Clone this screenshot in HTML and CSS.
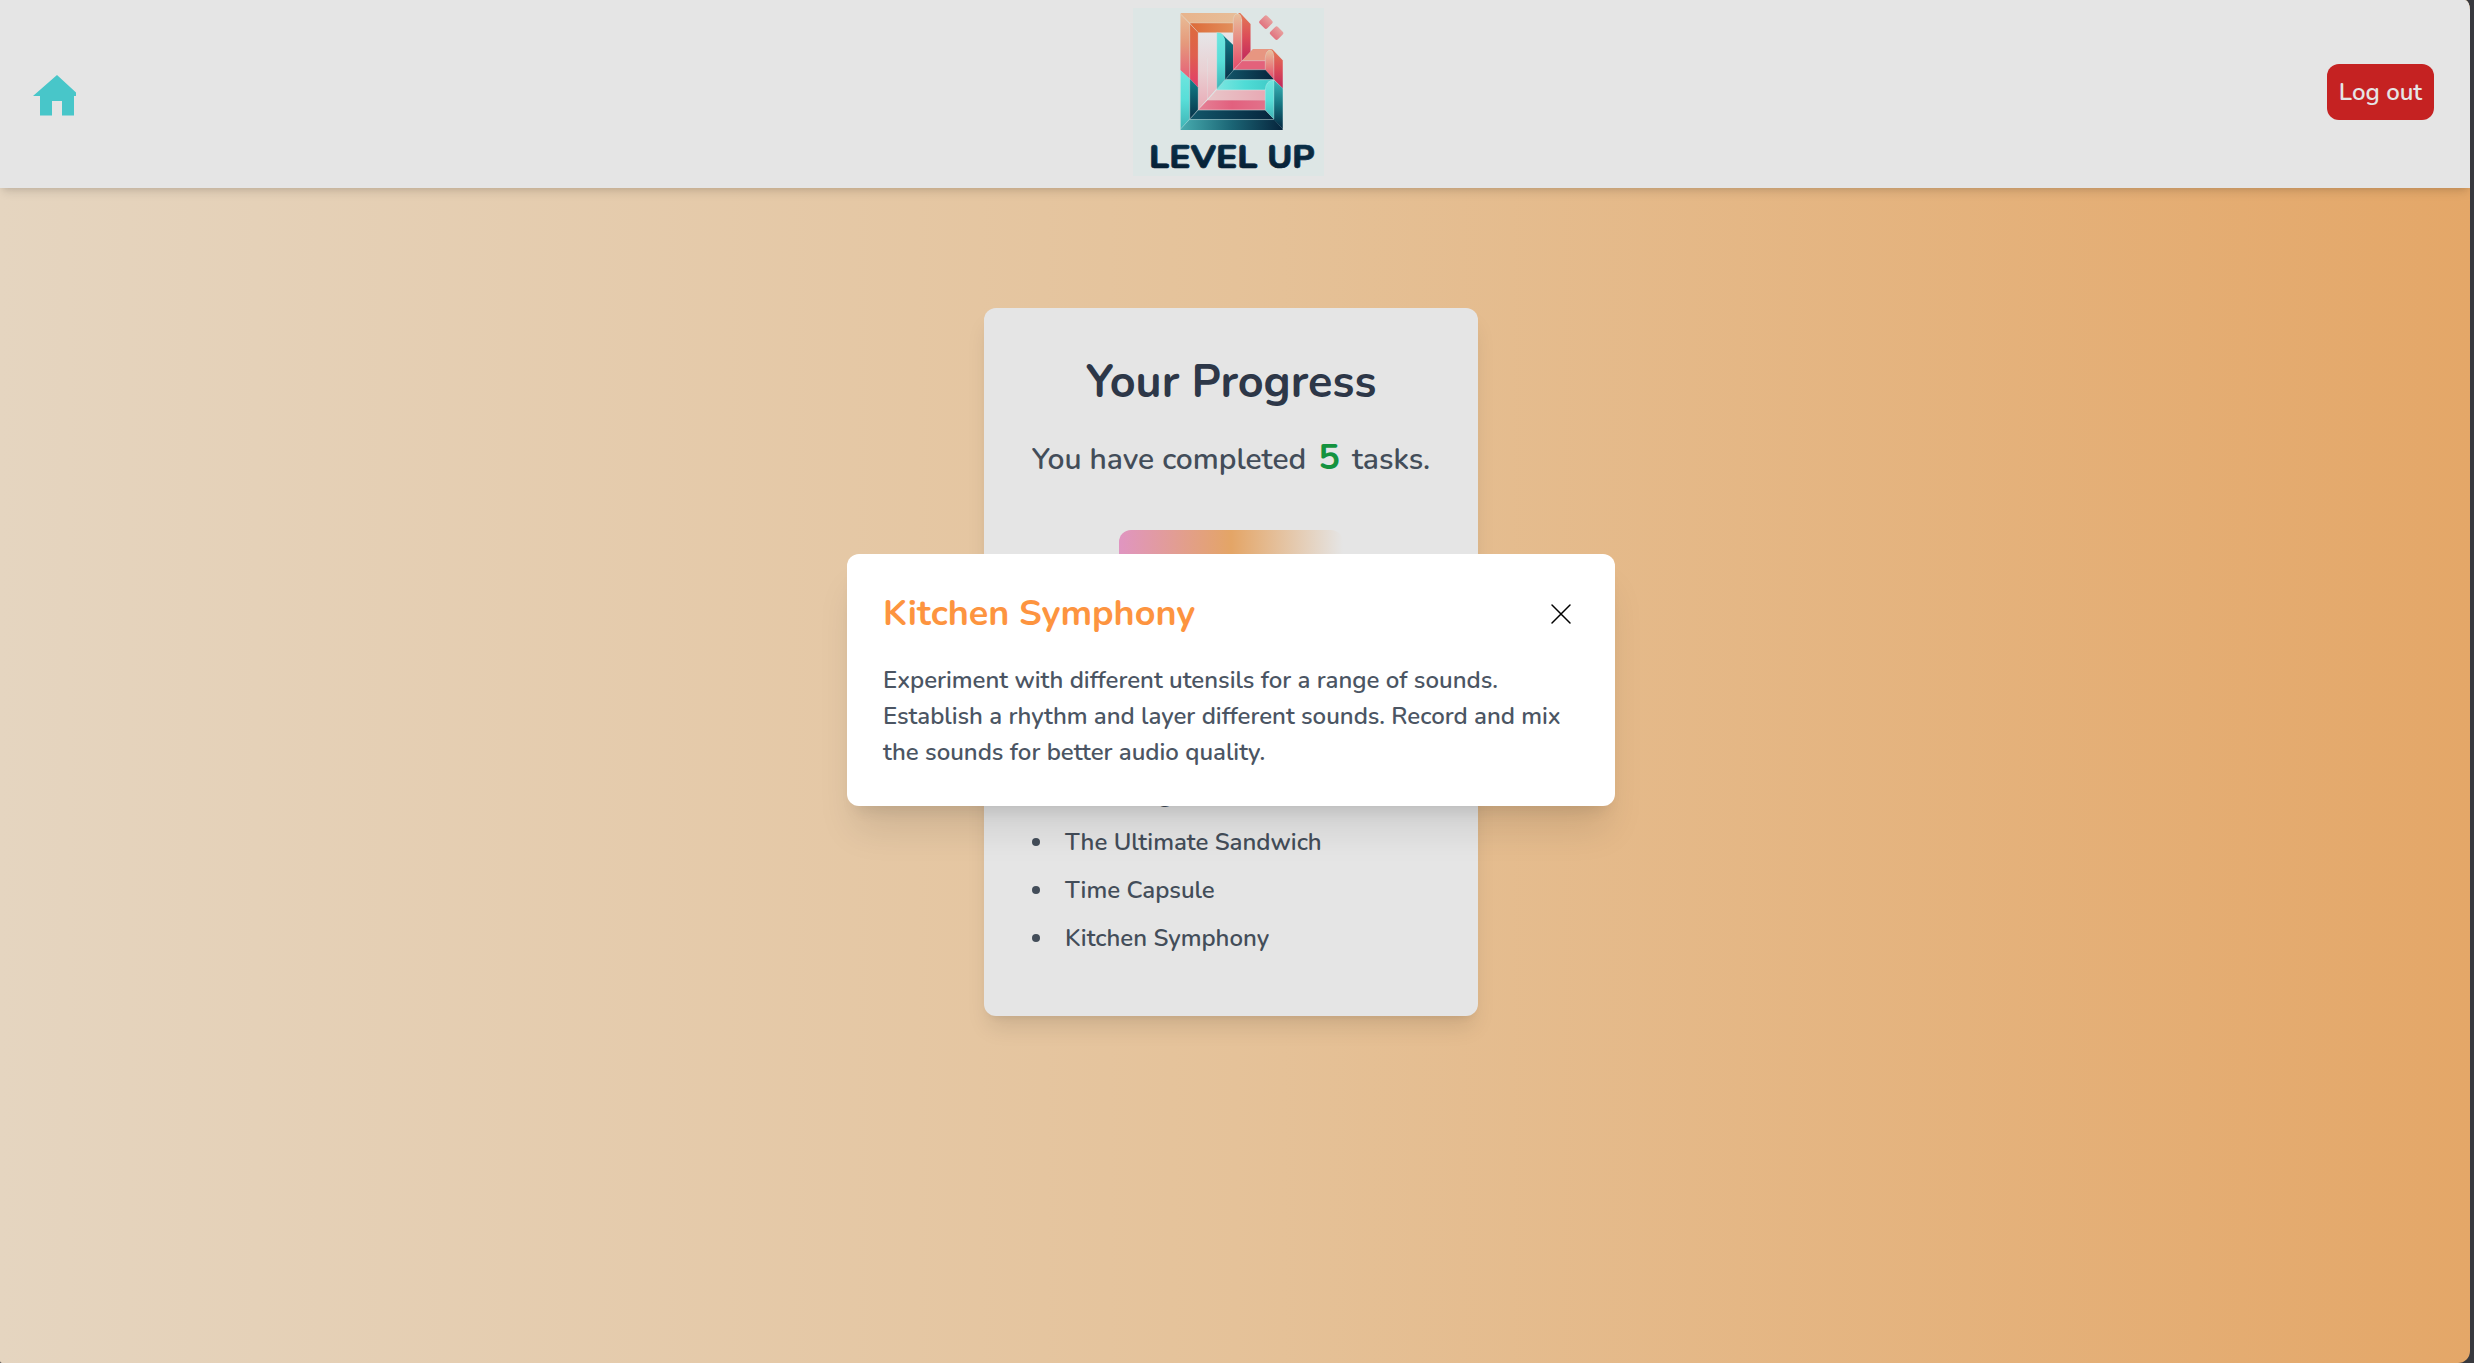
FILE: index.html
```html
<!DOCTYPE html>
<html lang="en">
<head>
<meta charset="utf-8">
<title>Level Up</title>
<link rel="stylesheet" href="styles.css">
</head>
<body>
<div class="app">
  <header class="header">
    <a class="home" href="#" aria-label="Home">
      <svg width="43" height="40" viewBox="0 0 43 40"><path fill="#48c6c9" d="M24 0 43 17.5V21H41V40.5H29V26H19V40.5H7V21H0Z"/></svg>
    </a>
    <svg class="logo" viewBox="40 24 572 503" role="img" aria-label="Level Up">
      <defs>
        <linearGradient id="outerL" x2="0" y2="1"><stop stop-color="#e9bd97"/><stop offset=".45" stop-color="#e59a7c"/><stop offset="1" stop-color="#e65f79"/></linearGradient>
        <linearGradient id="innerL" x2="0" y2="1"><stop stop-color="#dd6c3c"/><stop offset=".5" stop-color="#df5f4e"/><stop offset="1" stop-color="#e23c6b"/></linearGradient>
        <linearGradient id="topA"><stop stop-color="#e8b48c"/><stop offset="1" stop-color="#e7bd98"/></linearGradient>
        <linearGradient id="topB"><stop stop-color="#dd6a38"/><stop offset="1" stop-color="#e28f5c"/></linearGradient>
        <linearGradient id="armL" x2="0" y2="1"><stop stop-color="#e8c09c"/><stop offset=".5" stop-color="#e78580"/><stop offset="1" stop-color="#e24a6b"/></linearGradient>
        <linearGradient id="armR" x2="0" y2="1"><stop stop-color="#e37a55"/><stop offset=".5" stop-color="#dc4d58"/><stop offset="1" stop-color="#c0285c"/></linearGradient>
        <linearGradient id="paper" x2="0" y2="1"><stop stop-color="#e6e6e8"/><stop offset=".5" stop-color="#e9d0d3"/><stop offset="1" stop-color="#e9a9b5"/></linearGradient>
        <linearGradient id="teal" x2="0" y2="1"><stop stop-color="#70e6df"/><stop offset=".5" stop-color="#58ded8"/><stop offset="1" stop-color="#3fb3b5"/></linearGradient>
        <linearGradient id="tealH"><stop stop-color="#7ce6e0"/><stop offset=".5" stop-color="#4fdcd6"/><stop offset="1" stop-color="#3fc9c6"/></linearGradient>
        <linearGradient id="deep" x2="0" y2="1"><stop stop-color="#11808a"/><stop offset="1" stop-color="#073148"/></linearGradient>
        <linearGradient id="side" x2="0" y2="1"><stop stop-color="#3cb9ba"/><stop offset=".5" stop-color="#167581"/><stop offset="1" stop-color="#052841"/></linearGradient>
        <linearGradient id="navy"><stop stop-color="#12576a"/><stop offset="1" stop-color="#06243c"/></linearGradient>
        <linearGradient id="base"><stop stop-color="#48adb0"/><stop offset=".5" stop-color="#1b6575"/><stop offset="1" stop-color="#06243c"/></linearGradient>
        <linearGradient id="rose"><stop stop-color="#e58196"/><stop offset=".5" stop-color="#e2607e"/><stop offset="1" stop-color="#e2718a"/></linearGradient>
        <linearGradient id="blush"><stop stop-color="#e8c6c9"/><stop offset="1" stop-color="#e8a9b4"/></linearGradient>
        <linearGradient id="gem" x2="0" y2="1"><stop stop-color="#e8a09e"/><stop offset="1" stop-color="#e1737f"/></linearGradient>
        <linearGradient id="ink" x2="0" y2="1"><stop stop-color="#0b3650"/><stop offset="1" stop-color="#06192c"/></linearGradient>
      </defs>
      <path fill="#dde6e5" d="M40 24h572v503H40z"/>
      <path fill="url(#paper)" d="M235 97H340V209L235 329Z"/>
      <path fill="url(#topA)" d="M182 43q0-4 4-4H352L340 69H210Z"/>
      <path fill="url(#topB)" d="M210 69H340V97H235Z"/>
      <path fill="url(#outerL)" d="M182 41 210 70V236L182 210Z"/>
      <path fill="url(#innerL)" d="M210 70 235 97V262L210 236Z"/>
      <path fill="url(#teal)" d="M182 210 210 236V358L182 387Z"/>
      <path fill="url(#deep)" d="M210 236 235 262V329L210 358Z"/>
      <path fill="url(#teal)" d="M291 97Q316 97 316 124V240L291 269Z"/>
      <path fill="url(#deep)" d="M302 98 340 135V210L316 240V124Q315 107 302 98Z"/>
      <path fill="url(#armR)" d="M355 39H361L392 72V155L366 183V60Z"/>
      <path fill="url(#armL)" d="M340 66Q340 41 353 41 366 41 366 66V183L340 209Z"/>
      <path fill="#e79681" d="M399 147H456L437 182H366Z"/>
      <path fill="#e3627b" d="M366 182H437V209H340Z"/>
      <path fill="url(#armR)" d="M450 148H458L489 181V265L462 238V170Z"/>
      <path fill="url(#armL)" d="M436 176Q437 150 452 150 462 152 462 176V238L436 209Z"/>
      <path fill="url(#navy)" d="M340 209H436L462 238H316Z"/>
      <path fill="url(#tealH)" d="M316 239H460L437 269H291Z"/>
      <path fill="url(#blush)" d="M290 270H437V300H263Z"/>
      <path fill="url(#rose)" d="M263 300H437V329H235Z"/>
      <path fill="url(#navy)" d="M235 330H436L463 358H210Z"/>
      <path fill="url(#base)" d="M210 358H463L489 387Q489 389 486 389H184Q182 389 182 386Z"/>
      <path fill="url(#side)" d="M461 239 489 265V387L461 357Z"/>
      <path fill="url(#teal)" d="M436 329V270Q437 241 462 240V357Z"/>
      <g fill="none" stroke="#dfeeed" stroke-opacity=".45" stroke-width="2">
        <path d="M182 387 366 183M182 41 235 97V329M210 70V358M182 210V386M210 69H340M366 182H436M340 209H436M210 358H462M316 239H460M263 175V300"/>
        <path d="M340 97V66Q340 41 353 41 366 41 366 66V183M436 209V176Q437 150 452 150 462 152 462 176V357M436 329V270Q437 241 462 240M291 269V97M489 181V387"/>
      </g>
      <rect fill="url(#gem)" x="422" y="50" width="32" height="32" rx="6" transform="rotate(45 438 66)"/>
      <rect fill="url(#gem)" x="454" y="83" width="32" height="32" rx="6" transform="rotate(45 470 99)"/>
      <g class="wordmark" fill="url(#ink)" stroke="url(#ink)">
        <text x="88" y="504" textLength="325" lengthAdjust="spacingAndGlyphs">LEVEL</text>
        <text x="442" y="504" textLength="142" lengthAdjust="spacingAndGlyphs">UP</text>
      </g>
    </svg>
    <button class="logout">Log out</button>
  </header>

  <main class="main">
    <section class="card">
      <h1 class="card-title">Your Progress</h1>
      <p class="summary">You have completed <span class="count">5</span> tasks.</p>
      <div class="bar"></div>
      <ul class="tasks">
        <li>Sketching</li>
        <li>The Ultimate Sandwich</li>
        <li>Time Capsule</li>
        <li>Kitchen Symphony</li>
      </ul>
    </section>
  </main>
</div>

<div class="modal" role="dialog" aria-labelledby="modal-title">
  <div class="modal-head">
    <h2 class="modal-title" id="modal-title">Kitchen Symphony</h2>
    <svg class="close" viewBox="0 0 24 24"><path d="M6 18 18 6M6 6l12 12" fill="none" stroke="#000" stroke-width="1" stroke-linecap="round"/></svg>
  </div>
  <p class="modal-text">Experiment with different utensils for a range of sounds. Establish a rhythm and layer different sounds. Record and mix the sounds for better audio quality.</p>
</div>
</body>
</html>
```
FILE: styles.css
```css
* { box-sizing: border-box; margin: 0; padding: 0; }

body {
  height: 1363px;
  overflow: hidden;
  background: #38393e;
  font-family: Nunito, Lato, "Open Sans", sans-serif;
  font-size: 24px;
  font-weight: 600;
  line-height: 36px;
}

.app {
  width: 2470px;
  height: 1363px;
  display: flex;
  flex-direction: column;
  overflow: hidden;
  border-radius: 0 5px 12px 2px / 0 10px 12px 2px;
  background: linear-gradient(to right, #e5d5c0, #e5c299 50%, #e4a768);
}

.header {
  flex: none;
  height: 188px;
  display: grid;
  grid-template-columns: 1fr auto 1fr;
  align-items: start;
  padding: 8px 36px 0 33px;
  background: #e5e5e5;
  box-shadow: 0 6px 9px -1.5px rgba(0, 0, 0, .1), 0 3px 6px -3px rgba(0, 0, 0, .1);
}

.home { display: block; margin-top: 67px; }
.home svg { display: block; width: 43px; height: 40px; overflow: visible; }

.logo { display: block; width: 191px; height: 168px; margin-right: 11px; overflow: visible; }
.wordmark { font-size: 97px; font-weight: 800; stroke-width: 2; stroke-linejoin: round; }

.logout {
  justify-self: end;
  margin-top: 56px;
  width: 107px;
  height: 56px;
  border: 0;
  border-radius: 12px;
  background: #c52222;
  color: #e5e5e5;
  font: inherit;
}

.main { display: flex; justify-content: center; padding: 120px 8px 0 0; }

.card {
  width: 494px;
  height: 708px;
  padding: 48px;
  border-radius: 12px;
  background: #e5e5e5;
  box-shadow: 0 15px 22.5px -4.5px rgba(0, 0, 0, .1), 0 6px 9px -6px rgba(0, 0, 0, .1);
}

.card-title {
  margin-bottom: 24px;
  color: #2d3748;
  font-size: 45px;
  font-weight: 700;
  line-height: 54px;
  text-align: center;
}

.summary {
  display: flex;
  justify-content: center;
  align-items: baseline;
  gap: 12px;
  height: 48px;
  margin-bottom: 48px;
  color: #434d59;
  font-size: 30px;
  line-height: 42px;
  white-space: nowrap;
}

.count {
  color: #14933f;
  font-size: 36px;
  font-weight: 700;
  line-height: 48px;
}

.bar {
  width: 224px;
  height: 48px;
  margin: 0 auto 198px;
  border-radius: 12px;
  background: linear-gradient(to right, #e095c1, #e4a566 50%, rgba(229, 229, 229, 0));
}

.tasks { list-style: none; color: #434d59; }
.tasks li { display: flex; align-items: center; gap: 25px; margin-bottom: 12px; }
.tasks li::before { content: ""; width: 8px; height: 8px; border-radius: 50%; background: currentColor; }

.modal {
  position: absolute;
  left: 847px;
  top: 554px;
  width: 768px;
  height: 252px;
  padding: 36px;
  border-radius: 12px;
  background: #fff;
  box-shadow: 0 30px 37.5px -7.5px rgba(0, 0, 0, .1), 0 12px 15px -9px rgba(0, 0, 0, .1);
}

.modal-head { display: flex; justify-content: space-between; align-items: center; margin-bottom: 24px; }
.modal-title { color: #fd943f; font-size: 36px; font-weight: 700; line-height: 48px; }
.close { width: 36px; height: 36px; }
.modal-text { color: #4b5563; }
```
